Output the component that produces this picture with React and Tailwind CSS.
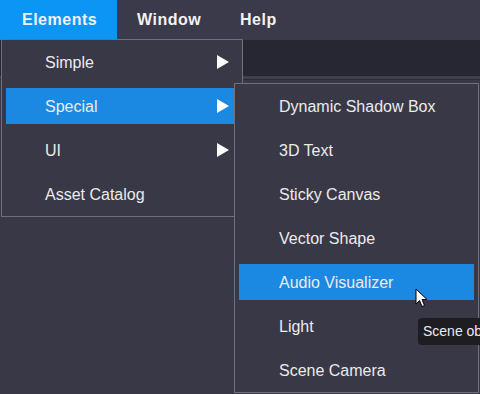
import React from 'react';

const mainItems = [
  { name: 'Simple', sub: true },
  { name: 'Special', sub: true, active: true },
  { name: 'UI', sub: true },
  { name: 'Asset Catalog' },
];

const specialItems = [
  { name: 'Dynamic Shadow Box' },
  { name: '3D Text' },
  { name: 'Sticky Canvas' },
  { name: 'Vector Shape' },
  { name: 'Audio Visualizer', active: true },
  { name: 'Light' },
  { name: 'Scene Camera' },
];

const Arrow = () => (
  <svg width="12" height="14" viewBox="0 0 12 14" className="shrink-0">
    <path d="M0 0 L12 7 L0 14 Z" fill="#ffffff" />
  </svg>
);

const MenuItem = ({ item, pl }) => (
  <div className="h-[44px] px-[4px] py-[4px]">
    <div
      className={`h-[36px] flex items-center justify-between pr-[9px] ${
        item.active ? 'bg-[#1b89e2]' : ''
      }`}
      style={{ paddingLeft: pl }}
    >
      <span className="pt-[2px] text-[16px] text-[#ebebeb]">{item.name}</span>
      {item.sub && <Arrow />}
    </div>
  </div>
);

export default function App() {
  return (
    <div className="relative w-[480px] h-[394px] overflow-hidden bg-[#393846] font-['Liberation_Sans',Arial,sans-serif]">
      {/* Menu bar */}
      <div className="h-[40px] flex bg-[#3b3a4a]">
        <div className="w-[117px] flex items-center pl-[22px] bg-[#0b96f5]">
          <span className="text-[16px] font-bold tracking-[0.5px] text-[#f2f2f2]">Elements</span>
        </div>
        <div className="w-[103px] flex items-center pl-[20px]">
          <span className="text-[16px] font-bold tracking-[0.5px] text-[#f2f2f2]">Window</span>
        </div>
        <div className="flex items-center pl-[20px]">
          <span className="text-[16px] font-bold tracking-[0.5px] text-[#f2f2f2]">Help</span>
        </div>
      </div>

      {/* Toolbar strip */}
      <div className="h-[36px] bg-[#272733]" />
      <div className="h-[3px] bg-[#403f4d]" />
      <div className="h-[1px] bg-[#2c2c38]" />

      {/* Main dropdown */}
      <div className="absolute left-[1px] top-[39px] w-[242px] border border-[#6f6f78] bg-[#393846]">
        {mainItems.map((item) => (
          <MenuItem key={item.name} item={item} pl="39px" />
        ))}
      </div>

      {/* Submenu */}
      <div className="absolute left-[234px] top-[83px] w-[245px] border border-[#6f6f78] bg-[#393846]">
        {specialItems.map((item) => (
          <MenuItem key={item.name} item={item} pl="40px" />
        ))}
      </div>

      {/* Tooltip */}
      <div className="absolute left-[418px] top-[318px] h-[27px] pl-[5px] pr-[8px] flex items-center rounded-[4px] bg-[#1d1d22] whitespace-nowrap">
        <span className="text-[14px] text-[#ececec]">Scene object</span>
      </div>

      {/* Cursor */}
      <svg className="absolute left-[415px] top-[288px]" width="13" height="20" viewBox="0 0 13 20">
        <path
          d="M1 1 L1 16 L4.5 12.5 L7 18.5 L9.5 17.5 L7 11.5 L12 11.5 Z"
          fill="#ffffff"
          stroke="#000000"
          strokeWidth="1"
          strokeLinejoin="round"
        />
      </svg>
    </div>
  );
}
